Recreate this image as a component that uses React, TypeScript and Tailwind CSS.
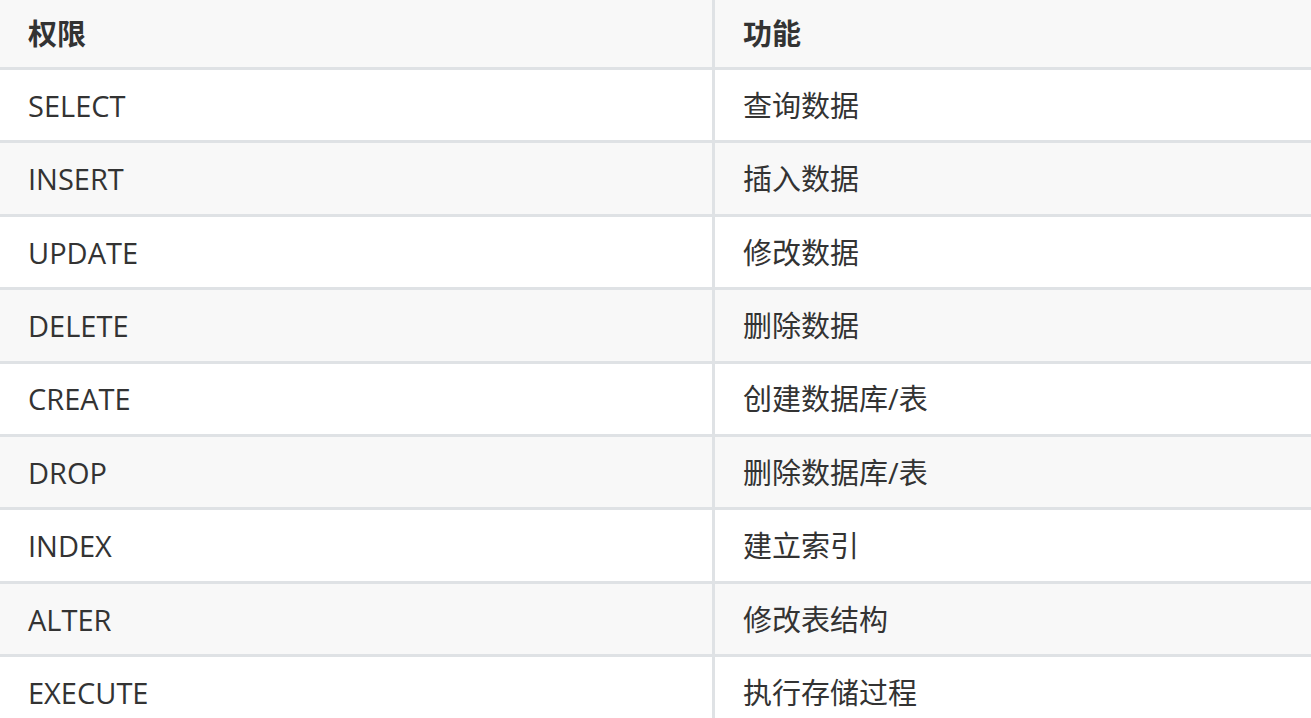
import React from "react";

const rows: [string, string][] = [
  ["SELECT", "查询数据"],
  ["INSERT", "插入数据"],
  ["UPDATE", "修改数据"],
  ["DELETE", "删除数据"],
  ["CREATE", "创建数据库/表"],
  ["DROP", "删除数据库/表"],
  ["INDEX", "建立索引"],
  ["ALTER", "修改表结构"],
  ["EXECUTE", "执行存储过程"],
];

const font = { fontFamily: '"Open Sans", "Noto Sans CJK SC", sans-serif' };

const App = () => {
  return (
    <div
      className="w-[1311px] h-[718px] overflow-hidden bg-white text-[#333333] text-[29px]"
      style={font}
    >
      <div className="flex h-[67px] bg-[#f8f8f8] font-bold">
        <div className="w-[712px] flex items-center pl-[28px]">权限</div>
        <div className="flex-1 flex items-center pl-[28px] border-l-[3px] border-[#dfe2e5]">
          功能
        </div>
      </div>
      {rows.map(([perm, desc], i) => (
        <div
          key={perm}
          className={`flex h-[73.375px] border-t-[3px] border-[#dfe2e5] ${
            i % 2 === 1 ? "bg-[#f8f8f8]" : "bg-white"
          }`}
        >
          <div className="w-[712px] flex items-center pl-[28px] pt-[1px]">{perm}</div>
          <div className="flex-1 flex items-center pl-[28px] pt-[1px] border-l-[3px] border-[#dfe2e5]">
            {desc}
          </div>
        </div>
      ))}
    </div>
  );
};

export default App;
